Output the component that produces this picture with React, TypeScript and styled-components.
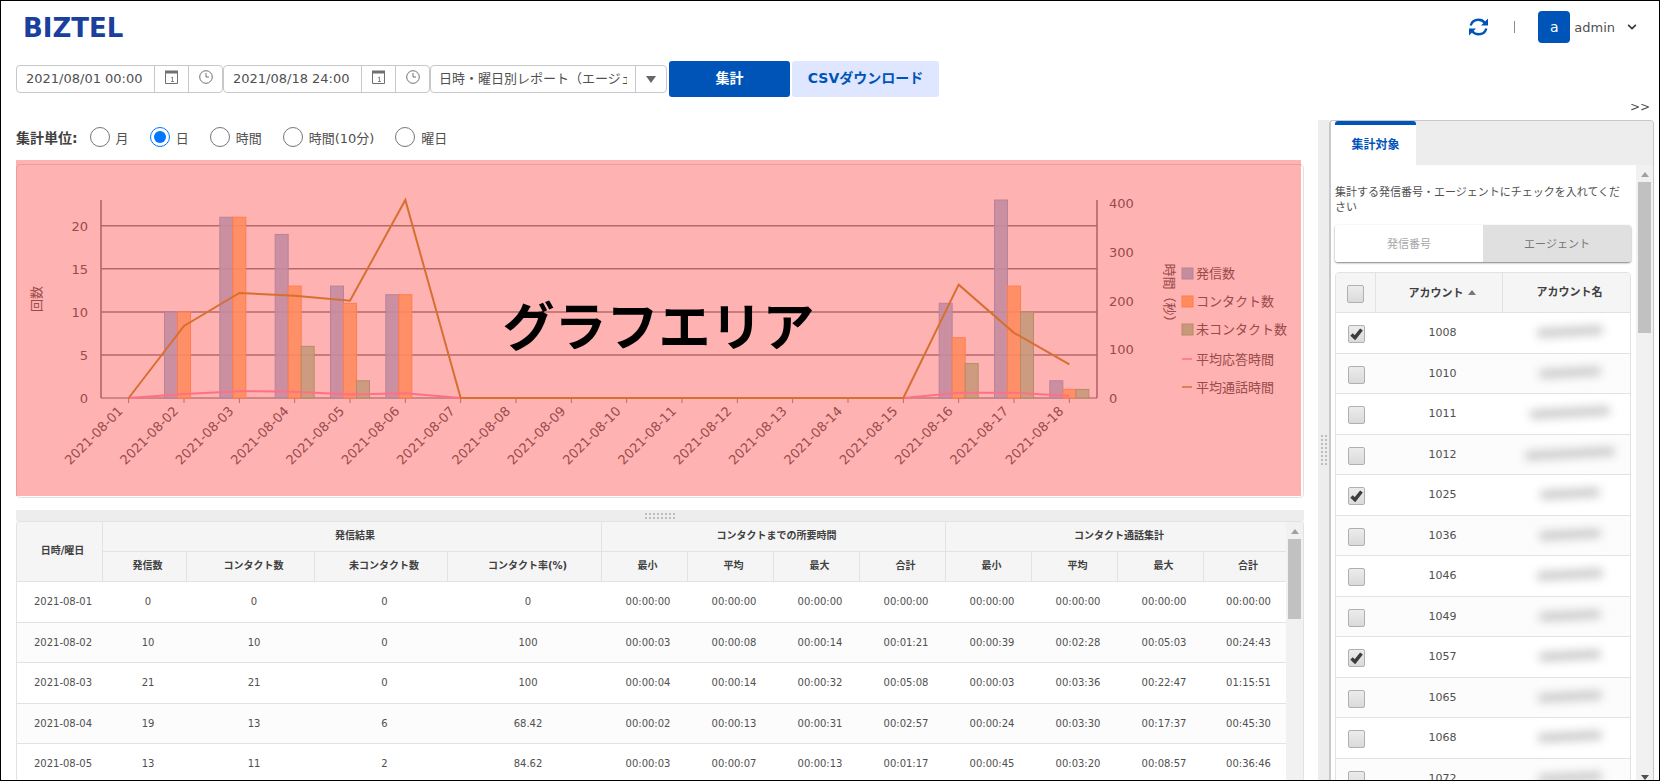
import React from "react";
import styled, { createGlobalStyle } from "styled-components";
import { FaChevronDown } from "react-icons/fa";

const BLUE = "#0054b8";
const LINE = "#e2e2e2";

const GlobalStyle = createGlobalStyle`
  * { box-sizing: border-box; }
  body { margin: 0; background: #fff; }
  body, input, select, button {
    font-family: "DejaVu Sans", "Noto Sans CJK JP", sans-serif;
    font-size: 13px;
    color: #505050;
  }
`;

const Page = styled.div`
  display: flex;
  flex-direction: column;
  height: 100vh;
  border: 1px solid #000;
  overflow: hidden;
`;

const Header = styled.header`
  display: flex;
  align-items: center;
  justify-content: space-between;
  flex: none;
  height: 52px;
  padding: 0 22px;
`;

const Logo = styled.a`
  padding-top: 2px;
  color: #1a3f9c;
  font-size: 26px;
  line-height: 32px;
  font-weight: bold;
  text-decoration: none;
`;

const UserArea = styled.div`
  display: flex;
  align-items: center;
`;

const IconButton = styled.button`
  display: flex;
  padding: 0;
  border: 0;
  background: none;
  color: ${BLUE};
`;

const Separator = styled.span`
  width: 1px;
  height: 12px;
  margin: 0 23px 0 26px;
  background: #8c8c8c;
`;

const UserMenu = styled.button`
  display: flex;
  align-items: center;
  padding: 0;
  border: 0;
  background: none;
  svg { margin-left: 12px; color: #333; }
`;

const Avatar = styled.span`
  display: flex;
  align-items: center;
  justify-content: center;
  width: 32px;
  height: 32px;
  margin-right: 4px;
  border-radius: 4px;
  background: ${BLUE};
  color: #fff;
  font-size: 14px;
`;

const Toolbar = styled.form`
  display: flex;
  align-items: center;
  flex: none;
  height: 36px;
  margin: 8px 0 0 15px;
`;

const Field = styled.div`
  display: flex;
  height: 28px;
  border: 1px solid #c8c8c8;
  border-radius: 4px;
  overflow: hidden;
`;

const DateInput = styled.input`
  width: 137px;
  padding: 0 0 2px 9px;
  border: 0;
  outline: 0;
  background: none;
`;

const FieldButton = styled.button`
  display: flex;
  align-items: center;
  justify-content: center;
  width: 34px;
  padding: 0 0 4px;
  border: 0;
  border-left: 1px solid #c8c8c8;
  background: none;
  color: #707070;
`;

const ReportSelect = styled.select`
  width: 204px;
  padding: 0 8px 2px;
  border: 0;
  outline: 0;
  background: none;
  appearance: none;
  text-overflow: clip;
`;

const SelectArrow = styled.span`
  display: flex;
  align-items: center;
  justify-content: center;
  width: 31px;
  border-left: 1px solid #c8c8c8;
`;

const ActionButton = styled.button<{ $primary?: boolean }>`
  width: ${(p) => (p.$primary ? 121 : 147)}px;
  height: 36px;
  margin-left: 2px;
  padding: 0 0 4px;
  border: 0;
  border-radius: 3px;
  background: ${(p) => (p.$primary ? BLUE : "#dfe6ff")};
  color: ${(p) => (p.$primary ? "#fff" : BLUE)};
  font-size: 14px;
  font-weight: bold;
`;

const CollapseRow = styled.div`
  display: flex;
  justify-content: flex-end;
  flex: none;
  height: 23px;
  padding-right: 9px;
`;

const CollapseButton = styled.button`
  height: 20px;
  padding: 0;
  border: 0;
  background: none;
  font-size: 12px;
  line-height: 20px;
`;

const Content = styled.div`
  display: flex;
  flex: 1;
  min-height: 0;
  padding-right: 5px;
`;

const Main = styled.main`
  display: flex;
  flex-direction: column;
  flex: 1;
  min-width: 0;
  padding: 0 14px 0 15px;
`;

const UnitRow = styled.fieldset`
  display: flex;
  align-items: center;
  flex: none;
  height: 44px;
  margin: 0;
  padding: 7px 0 0;
  border: 0;
`;

const UnitTitle = styled.span`
  margin-right: 12px;
  font-size: 14px;
  font-weight: bold;
  color: #404040;
`;

const RadioLabel = styled.label`
  display: flex;
  align-items: center;
  gap: 6px;
  margin-right: 21px;
`;

const Radio = styled.input`
  display: grid;
  place-content: center;
  width: 20px;
  height: 20px;
  margin: 0;
  border: 1px solid #767676;
  border-radius: 50%;
  background: #fff;
  appearance: none;
  &:checked { border-color: #0075ff; }
  &:checked::before {
    content: "";
    width: 12px;
    height: 12px;
    border-radius: 50%;
    background: #0075ff;
  }
`;

const ChartPanel = styled.section`
  position: relative;
  flex: none;
  height: 334px;
  border: 1px solid ${LINE};
  border-radius: 4px;
`;

const ChartSvg = styled.svg`
  display: block;
  width: 100%;
  height: 332px;
  text { font-size: 13px; fill: #6c6c6c; }
`;

const ChartOverlay = styled.div`
  position: absolute;
  inset: -5px 2px 1px -1px;
  display: flex;
  align-items: center;
  justify-content: center;
  background: rgba(255, 0, 0, 0.3);
  color: #000;
  font-size: 52px;
  line-height: 60px;
  font-weight: bold;
`;

const HorizontalSplitter = styled.div`
  display: flex;
  align-items: center;
  justify-content: center;
  flex: none;
  height: 11px;
  margin-top: 12px;
  background: #ededed;
`;

const VerticalSplitter = styled.div`
  display: flex;
  align-items: center;
  justify-content: center;
  flex: none;
  width: 11px;
  background: #ededed;
`;

const Grip = styled.span<{ $vertical?: boolean }>`
  width: ${(p) => (p.$vertical ? 8 : 32)}px;
  height: ${(p) => (p.$vertical ? 32 : 8)}px;
  background: radial-gradient(circle, #bdbdbd 1px, transparent 1px) 0 0 / 4px 4px;
`;

const TablePanel = styled.section`
  display: flex;
  flex: 1;
  min-height: 0;
  border: 1px solid ${LINE};
  border-bottom: 0;
  border-radius: 4px 4px 0 0;
  overflow: hidden;
`;

const TableArea = styled.div`
  flex: 1;
  min-width: 0;
  overflow: hidden;
`;

const DataTable = styled.table<{ $size: number }>`
  width: 100%;
  table-layout: fixed;
  border-collapse: separate;
  border-spacing: 0;
  font-size: ${(p) => p.$size}px;
  line-height: 14px;
  text-align: center;
  th, td { padding: 0 0 0 6px; border-bottom: 1px solid ${LINE}; }
  th {
    border-right: 1px solid ${LINE};
    background: #f5f5f5;
    color: #404040;
  }
  td { height: 41px; }
  tbody tr:nth-child(even) td { height: 40px; background: #fcfcfc; }
`;

const ReportTable = styled(DataTable)`
  th { height: 30px; padding-bottom: 2px; }
`;

const Track = styled.div`
  display: flex;
  flex-direction: column;
  align-items: center;
  justify-content: space-between;
  flex: none;
  width: 17px;
  background: #f1f1f1;
`;

const TrackStart = styled.div`
  display: flex;
  flex-direction: column;
  align-items: center;
  gap: 5px;
  padding-top: 7px;
`;

const Thumb = styled.span<{ $length: number }>`
  width: 13px;
  height: ${(p) => p.$length}px;
  background: #c1c1c1;
`;

const Arrow = styled.span<{ $down?: boolean; $color?: string; $large?: boolean }>`
  width: 0;
  height: 0;
  border: ${(p) => (p.$large ? 5 : 4)}px solid transparent;
  border-${(p) => (p.$down ? "bottom" : "top")}-width: 0;
  border-${(p) => (p.$down ? "top" : "bottom")}-width: ${(p) => (p.$large ? 7 : 5)}px;
  border-${(p) => (p.$down ? "top" : "bottom")}-color: ${(p) => p.$color || "#a0a0a0"};
`;

const Sidebar = styled.aside`
  display: flex;
  flex-direction: column;
  flex: none;
  width: 325px;
  border: solid #c8c8c8;
  border-width: 1px 1px 0 2px;
  border-radius: 4px 4px 0 0;
  overflow: hidden;
`;

const TabStrip = styled.div`
  flex: none;
  height: 44px;
  padding-left: 4px;
  background: linear-gradient(90deg, #fff 4px, #ededed 4px);
`;

const Tab = styled.button`
  width: 81px;
  height: 44px;
  padding: 0 0 4px;
  border: 0;
  border-top: 4px solid ${BLUE};
  border-radius: 3px 3px 0 0;
  background: #fff;
  color: ${BLUE};
  font-size: 12px;
  font-weight: bold;
`;

const SidebarScroll = styled.div`
  display: flex;
  flex: 1;
  min-height: 0;
`;

const SidebarBody = styled.div`
  flex: 1;
  min-width: 0;
  padding: 20px 5px 0 4px;
  overflow: hidden;
`;

const Description = styled.p`
  margin: 0 0 10px;
  font-size: 11px;
  line-height: 15px;
`;

const Segments = styled.div`
  display: flex;
  height: 37px;
  margin-bottom: 10px;
  border-radius: 3px;
  box-shadow: 0 1px 2px rgba(0, 0, 0, 0.5);
  overflow: hidden;
`;

const Segment = styled.button<{ $selected?: boolean }>`
  flex: 1;
  padding: 0 0 2px;
  border: 0;
  background: ${(p) => (p.$selected ? "#e0e0e0" : "#fff")};
  color: ${(p) => (p.$selected ? "#777" : "#a8a8a8")};
  font-size: 11px;
`;

const AccountFrame = styled.div`
  border: 1px solid ${LINE};
  border-radius: 4px 4px 0 0;
  overflow: hidden;
`;

const AccountTable = styled(DataTable)`
  th { height: 40px; }
  th:last-child { border-right: 0; }
  th:first-child, td:first-child { padding-left: 0; }
`;

const SortButton = styled.button`
  display: inline-flex;
  align-items: center;
  gap: 4px;
  padding: 0;
  border: 0;
  background: none;
  color: inherit;
  font-size: 11px;
  font-weight: bold;
`;

const CheckCell = styled.div`
  display: grid;
  place-items: center;
  padding-top: 2px;
`;

const CheckBox = styled.input`
  grid-area: 1 / 1;
  width: 17px;
  height: 18px;
  margin: 0;
  border: 1px solid #b0b0b0;
  border-radius: 2px;
  background: linear-gradient(#ececec, #dadada);
  appearance: none;
  & + svg { display: none; }
  &:checked + svg { display: block; }
`;

const CheckMark = styled.svg`
  grid-area: 1 / 1;
  pointer-events: none;
`;

const Redacted = styled.span<{ $w: number }>`
  display: inline-block;
  width: ${(p) => p.$w}px;
  height: 9px;
  border-radius: 4px;
  background: #cacaca;
  filter: blur(5px);
  transform: rotate(-3deg);
`;

const RefreshIcon = () => (
  <svg width="19" height="18" viewBox="0 0 19 18" fill="none" stroke="currentColor" strokeWidth="2.4">
    <path d="M1.700 7.500C2.600 4 5.700 1.700 9.500 1.700c2.600 0 4.800 1.100 6.200 3" />
    <path d="M17.300 10.500C16.400 14 13.300 16.300 9.500 16.300c-2.600 0-4.800-1.100-6.200-3" />
    <path d="M19 .5v7h-7zM0 17.500v-7h7z" fill="currentColor" stroke="none" />
  </svg>
);

const CalendarIcon = () => (
  <svg width="13" height="14" viewBox="0 0 13 14" fill="none" stroke="currentColor">
    <path d="M.5 1.500h12v12H.5z" />
    <path d="M0 2h13" strokeWidth="3" />
    <path d="M6 8l1.500-1v5M6 11.500h3" strokeWidth=".8" />
  </svg>
);

const ClockIcon = () => (
  <svg width="14" height="14" viewBox="0 0 14 14" fill="none" stroke="currentColor">
    <circle cx="7" cy="7" r="6.300" />
    <path d="M7 3v4h3" />
  </svg>
);

const DateField = ({ label, value }: { label: string; value: string }) => (
  <Field>
    <DateInput type="text" aria-label={label} defaultValue={value} />
    <FieldButton type="button" aria-label={`${label} 日付`}><CalendarIcon /></FieldButton>
    <FieldButton type="button" aria-label={`${label} 時刻`}><ClockIcon /></FieldButton>
  </Field>
);

const Scrollbar = ({ length, end }: { length: number; end?: boolean }) => (
  <Track>
    <TrackStart>
      <Arrow />
      <Thumb $length={length} />
    </TrackStart>
    {end && <Arrow $down $color="#505050" />}
  </Track>
);

const days = Array.from({ length: 18 }, (_, i) => `2021-08-${String(i + 1).padStart(2, "0")}`);
const zeros = Array(9).fill(0);
const series = [
  { name: "発信数", fill: "#abc9e4", stroke: "#9dbbdc", data: [0, 10, 21, 19, 13, 12, ...zeros, 11, 23, 2] },
  { name: "コンタクト数", fill: "#ffc888", stroke: "#ffb46c", data: [0, 10, 21, 13, 11, 12, ...zeros, 7, 13, 1] },
  { name: "未コンタクト数", fill: "#b0dab0", stroke: "#98c898", data: [0, 0, 0, 6, 2, 0, ...zeros, 4, 10, 1] },
];
const lines = [
  { name: "平均応答時間", color: "#ff9fc0", data: [0, 8, 14, 13, 7, 10, ...zeros, 11, 11, 4] },
  { name: "平均通話時間", color: "#c5a045", data: [0, 148, 216, 210, 200, 407, ...zeros, 233, 134, 69] },
];

const LEFT = 84;
const RIGHT = 1080;
const TOP = 35;
const BASE = 233;
const STEP = (RIGHT - LEFT) / days.length;
const BAR = 13;
const center = (i: number) => LEFT + STEP * (i + 0.5);
const countY = (v: number) => BASE - (v * (BASE - TOP)) / 23;
const secondsY = (v: number) => BASE - (v * (BASE - TOP)) / 407;

const Chart = () => (
  <ChartSvg viewBox="0 0 1286 332" role="img" aria-label="発信数と通話時間のグラフ">
    {[5, 10, 15, 20].map((v) => (
      <path key={v} d={`M${LEFT} ${countY(v)}H${RIGHT}`} stroke="#969696" strokeWidth="1.5" />
    ))}
    {[0, 5, 10, 15, 20].map((v) => (
      <text key={v} x={LEFT - 13} y={countY(v) + 5} textAnchor="end">{v}</text>
    ))}
    {[0, 100, 200, 300, 400].map((v) => (
      <text key={v} x={RIGHT + 12} y={secondsY(v) + 5}>{v}</text>
    ))}
    <path d={`M${LEFT} ${BASE}H${RIGHT}`} stroke="#aaa" strokeWidth="1.5" />
    <path d={`M${LEFT} ${TOP}V${BASE}M${RIGHT} ${TOP}V${BASE}`} stroke="#8c8c8c" strokeWidth="1.5" />
    {days.map((d, i) => (
      <g key={d}>
        <path d={`M${center(i)} ${BASE}v5`} stroke="#999" />
        <text textAnchor="end" transform={`translate(${center(i) - 5} ${BASE + 14}) rotate(-45)`}>{d}</text>
      </g>
    ))}
    {series.map((s, k) =>
      s.data.map((v, i) =>
        v ? (
          <rect
            key={`${k}-${i}`}
            x={center(i) - 19.5 + BAR * k}
            y={countY(v)}
            width={BAR}
            height={BASE - countY(v)}
            fill={s.fill}
            stroke={s.stroke}
            fillOpacity=".9"
          />
        ) : null
      )
    )}
    {lines.map((l) => (
      <polyline
        key={l.name}
        points={l.data.map((v, i) => `${center(i)},${secondsY(v)}`).join(" ")}
        fill="none"
        stroke={l.color}
        strokeWidth="2"
      />
    ))}
    <text textAnchor="middle" transform="translate(24 134) rotate(-90)">回数</text>
    <text textAnchor="middle" transform="translate(1148 131) rotate(90)">時間（秒）</text>
    {series.map((s, k) => (
      <g key={s.name}>
        <rect x="1165" y={103 + k * 28} width="11" height="11" fill={s.fill} stroke={s.stroke} />
        <text x="1179" y={113 + k * 28}>{s.name}</text>
      </g>
    ))}
    {lines.map((l, k) => (
      <g key={l.name}>
        <path d={`M1165 ${194 + k * 28}h10`} stroke={l.color} strokeWidth="1.500" />
        <text x="1179" y={199 + k * 28}>{l.name}</text>
      </g>
    ))}
  </ChartSvg>
);

const reportRows = [
  "2021-08-01 0 0 0 0 00:00:00 00:00:00 00:00:00 00:00:00 00:00:00 00:00:00 00:00:00 00:00:00",
  "2021-08-02 10 10 0 100 00:00:03 00:00:08 00:00:14 00:01:21 00:00:39 00:02:28 00:05:03 00:24:43",
  "2021-08-03 21 21 0 100 00:00:04 00:00:14 00:00:32 00:05:08 00:00:03 00:03:36 00:22:47 01:15:51",
  "2021-08-04 19 13 6 68.42 00:00:02 00:00:13 00:00:31 00:02:57 00:00:24 00:03:30 00:17:37 00:45:30",
  "2021-08-05 13 11 2 84.62 00:00:03 00:00:07 00:00:13 00:01:17 00:00:45 00:03:20 00:08:57 00:36:46",
].map((r) => r.split(" "));

const columnWidths = [86, 84, 128, 133, 154, 86, 86, 86, 86, 86, 86, 86, 83];
const subHeads = [
  "発信数", "コンタクト数", "未コンタクト数", "コンタクト率(%)",
  "最小", "平均", "最大", "合計", "最小", "平均", "最大", "合計",
];

const accounts = [
  { id: "1008", checked: true, w: 66 },
  { id: "1010", w: 62 },
  { id: "1011", w: 80 },
  { id: "1012", w: 90 },
  { id: "1025", checked: true, w: 60 },
  { id: "1036", w: 62 },
  { id: "1046", w: 66 },
  { id: "1049", w: 62 },
  { id: "1057", checked: true, w: 62 },
  { id: "1065", w: 64 },
  { id: "1068", w: 64 },
  { id: "1072", w: 64 },
];

const Check = ({ label, checked }: { label: string; checked?: boolean }) => (
  <CheckCell>
    <CheckBox type="checkbox" aria-label={label} defaultChecked={checked} />
    <CheckMark width="13" height="12" viewBox="0 0 13 12">
      <path d="M1.500 6.500L5 9.700 11.500 1.500" fill="none" stroke="#3c3c3c" strokeWidth="3.500" />
    </CheckMark>
  </CheckCell>
);

export default function App() {
  return (
    <Page>
      <GlobalStyle />
      <Header>
        <Logo href="#">BIZTEL</Logo>
        <UserArea>
          <IconButton type="button" aria-label="更新"><RefreshIcon /></IconButton>
          <Separator />
          <UserMenu type="button">
            <Avatar>a</Avatar>
            admin
            <FaChevronDown size={10} />
          </UserMenu>
        </UserArea>
      </Header>
      <Toolbar>
        <DateField label="開始" value="2021/08/01 00:00" />
        <DateField label="終了" value="2021/08/18 24:00" />
        <Field>
          <ReportSelect aria-label="レポート種別">
            <option>日時・曜日別レポート（エージェント）</option>
          </ReportSelect>
          <SelectArrow><Arrow $down $large $color="#666" /></SelectArrow>
        </Field>
        <ActionButton type="button" $primary>集計</ActionButton>
        <ActionButton type="button">CSVダウンロード</ActionButton>
      </Toolbar>
      <CollapseRow>
        <CollapseButton type="button">&gt;&gt;</CollapseButton>
      </CollapseRow>
      <Content>
        <Main>
          <UnitRow>
            <UnitTitle>集計単位:</UnitTitle>
            {["月", "日", "時間", "時間(10分)", "曜日"].map((u) => (
              <RadioLabel key={u}>
                <Radio type="radio" name="unit" defaultChecked={u === "日"} />
                {u}
              </RadioLabel>
            ))}
          </UnitRow>
          <ChartPanel>
            <Chart />
            <ChartOverlay>グラフエリア</ChartOverlay>
          </ChartPanel>
          <HorizontalSplitter><Grip /></HorizontalSplitter>
          <TablePanel>
            <TableArea>
              <ReportTable $size={10}>
                <colgroup>
                  {columnWidths.map((w, i) => <col key={i} width={w} />)}
                </colgroup>
                <thead>
                  <tr>
                    <th rowSpan={2}>日時/曜日</th>
                    <th colSpan={4}>発信結果</th>
                    <th colSpan={4}>コンタクトまでの所要時間</th>
                    <th colSpan={4}>コンタクト通話集計</th>
                  </tr>
                  <tr>{subHeads.map((h, i) => <th key={i}>{h}</th>)}</tr>
                </thead>
                <tbody>
                  {reportRows.map((r) => (
                    <tr key={r[0]}>{r.map((c, i) => <td key={i}>{c}</td>)}</tr>
                  ))}
                </tbody>
              </ReportTable>
            </TableArea>
            <Scrollbar length={80} />
          </TablePanel>
        </Main>
        <VerticalSplitter><Grip $vertical /></VerticalSplitter>
        <Sidebar>
          <TabStrip><Tab type="button">集計対象</Tab></TabStrip>
          <SidebarScroll>
            <SidebarBody>
              <Description>集計する発信番号・エージェントにチェックを入れてください</Description>
              <Segments>
                <Segment type="button">発信番号</Segment>
                <Segment type="button" $selected>エージェント</Segment>
              </Segments>
              <AccountFrame>
                <AccountTable $size={11}>
                  <colgroup>
                    <col width={40} />
                    <col width={127} />
                    <col width={127} />
                  </colgroup>
                  <thead>
                    <tr>
                      <th><Check label="すべて選択" /></th>
                      <th><SortButton type="button">アカウント<Arrow $color="#777" /></SortButton></th>
                      <th>アカウント名</th>
                    </tr>
                  </thead>
                  <tbody>
                    {accounts.map((a) => (
                      <tr key={a.id}>
                        <td><Check label={a.id} checked={a.checked} /></td>
                        <td>{a.id}</td>
                        <td><Redacted $w={a.w} /></td>
                      </tr>
                    ))}
                  </tbody>
                </AccountTable>
              </AccountFrame>
            </SidebarBody>
            <Scrollbar length={151} end />
          </SidebarScroll>
        </Sidebar>
      </Content>
    </Page>
  );
}
